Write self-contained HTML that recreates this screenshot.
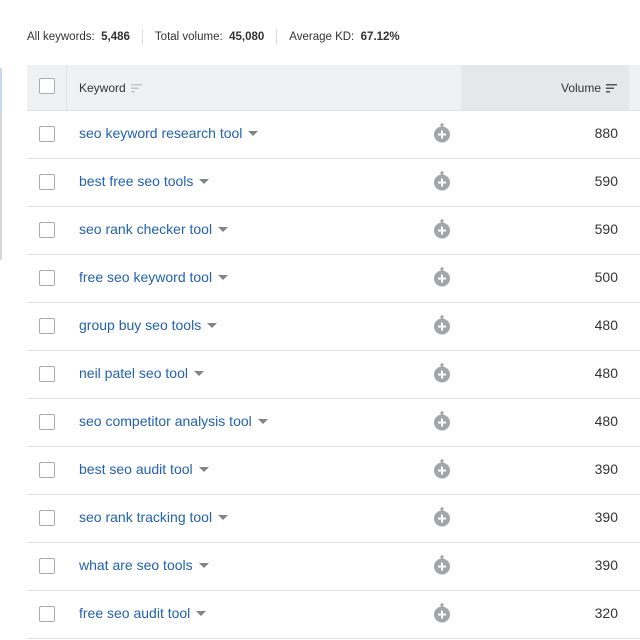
<!DOCTYPE html>
<html><head><meta charset="utf-8"><style>
*{margin:0;padding:0;box-sizing:border-box}
body{width:640px;height:640px;overflow:hidden;background:#fff;font-family:"Liberation Sans",sans-serif;position:relative;color:#333}
.sum{position:absolute;top:29px;left:27px;font-size:11.5px;color:#333;white-space:nowrap}
.sum span{display:inline-block}
.sum b{font-weight:bold}
.sep{display:inline-block;width:1px;height:16px;background:#dcdcdc;vertical-align:middle;margin:0 12px}
.lp{position:absolute;left:0;top:68px;width:2px;height:192px;background:#d5d8da}
.lp2{position:absolute;left:0;top:68px;width:2px;height:42px;background:#c7d9ea}
.hdr{position:absolute;left:27px;top:65px;width:613px;height:46px;background:#f0f1f3;border-bottom:1px solid #dfe2e4}
.hvol{position:absolute;left:461px;top:65px;width:168px;height:46px;background:#e5e7e9;border-bottom:1px solid #dfe2e4}
.hdiv{position:absolute;left:66px;top:65px;width:1px;height:45px;background:#e0e2e4}
.cb{position:absolute;left:39px;width:16px;height:16px;border:1px solid #a9adb0;border-radius:2px;background:#fff}
.ht{position:absolute;font-size:12px;color:#333;top:81px}
.row{position:absolute;left:27px;width:613px;height:48px;border-bottom:1px solid #e0e4e6}
.kw{position:absolute;left:79px;font-size:14px;color:#2162b3;white-space:nowrap}
.tri{display:inline-block;width:0;height:0;border-left:5px solid transparent;border-right:5px solid transparent;border-top:5px solid #7f8589;margin-left:6px;vertical-align:middle;position:relative;top:-1px}
.vol{position:absolute;right:22px;font-size:14px;color:#333}
.ic{position:absolute;left:433px}
</style></head><body>
<div class="sum"><span>All keywords:&nbsp; <b>5,486</b></span><span class="sep"></span><span>Total volume:&nbsp; <b>45,080</b></span><span class="sep"></span><span>Average KD:&nbsp; <b>67.12%</b></span></div>
<div class="lp"></div><div class="lp2"></div>
<div class="hdr"></div><div class="hvol"></div><div class="hdiv"></div>
<div class="cb" style="top:78px"></div>
<div class="ht" style="left:79px">Keyword <svg width="11" height="9" style="vertical-align:middle;margin-left:2px"><rect x="0" y="0" width="11" height="1.5" fill="#c4c7ca"/><rect x="0" y="3.5" width="8" height="1.5" fill="#c4c7ca"/><rect x="0" y="7" width="4" height="1.5" fill="#c4c7ca"/></svg></div>
<div class="ht" style="left:561px">Volume <svg width="11" height="9" style="vertical-align:middle;margin-left:2px"><rect x="0" y="0" width="11" height="1.5" fill="#555"/><rect x="0" y="3.5" width="8" height="1.5" fill="#555"/><rect x="0" y="7" width="4" height="1.5" fill="#555"/></svg></div>
<div id="rows"></div>
<script>
var d=[["seo keyword research tool",880],["best free seo tools",590],["seo rank checker tool",590],["free seo keyword tool",500],["group buy seo tools",480],["neil patel seo tool",480],["seo competitor analysis tool",480],["best seo audit tool",390],["seo rank tracking tool",390],["what are seo tools",390],["free seo audit tool",320]];
var h="";
d.forEach(function(r,i){var t=111+i*48;
h+='<div class="row" style="top:'+t+'px"></div>';
h+='<div class="cb" style="top:'+(t+15)+'px"></div>';
h+='<div class="kw" style="top:'+(t+14)+'px">'+r[0]+'<span class="tri"></span></div>';
h+='<svg class="ic" style="top:'+(t+12)+'px" width="18" height="20" viewBox="0 0 18 20"><rect x="8" y="1" width="2" height="3" fill="#a2a6a8"/><circle cx="9" cy="1.8" r="1.6" fill="#a2a6a8"/><circle cx="9" cy="11.5" r="8" fill="#a2a6a8"/><rect x="5" y="10.5" width="8" height="2" fill="#fff"/><rect x="8" y="7.5" width="2" height="8" fill="#fff"/></svg>';
h+='<div class="vol" style="top:'+(t+14)+'px">'+r[1]+'</div>';});
document.getElementById("rows").innerHTML=h;
</script>
</body></html>
